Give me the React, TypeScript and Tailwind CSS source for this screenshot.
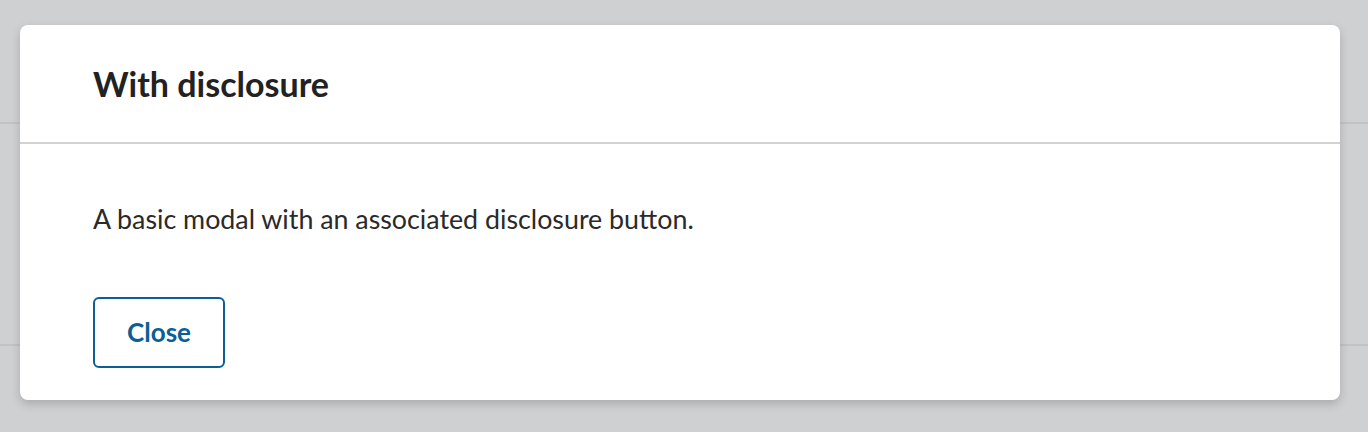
export default function App() {
  return (
    <div className="relative h-[432px] w-[1368px] overflow-hidden bg-[#cfd0d2]" style={{ fontFamily: 'Lato, "Open Sans", sans-serif' }}>
      <div className="absolute left-0 right-0 top-[122px] h-[2px] bg-[#c1c3c5]" />
      <div className="absolute left-0 right-0 top-[344px] h-[2px] bg-[#c1c3c5]" />
      <div className="relative ml-[20px] mt-[25px] h-[375px] w-[1320px] rounded-lg bg-white shadow-[0_4px_10px_rgba(0,0,0,0.18)]">
        <div className="flex h-[119px] items-center border-b-2 border-[#d2d2d2] pl-[73px]">
          <h2 className="text-[34px] font-bold leading-[40px] text-[#222]">With disclosure</h2>
        </div>
        <div className="px-[73px] pt-[57px]">
          <p className="text-[26.8px] leading-[36px] text-[#2a2a2a]">A basic modal with an associated disclosure button.</p>
          <button className="mt-[60px] flex h-[71px] w-[132px] items-center justify-center rounded-md border-2 border-[#0b5f95] text-[26px] font-bold text-[#0b5f95]">
            Close
          </button>
        </div>
      </div>
    </div>
  );
}
